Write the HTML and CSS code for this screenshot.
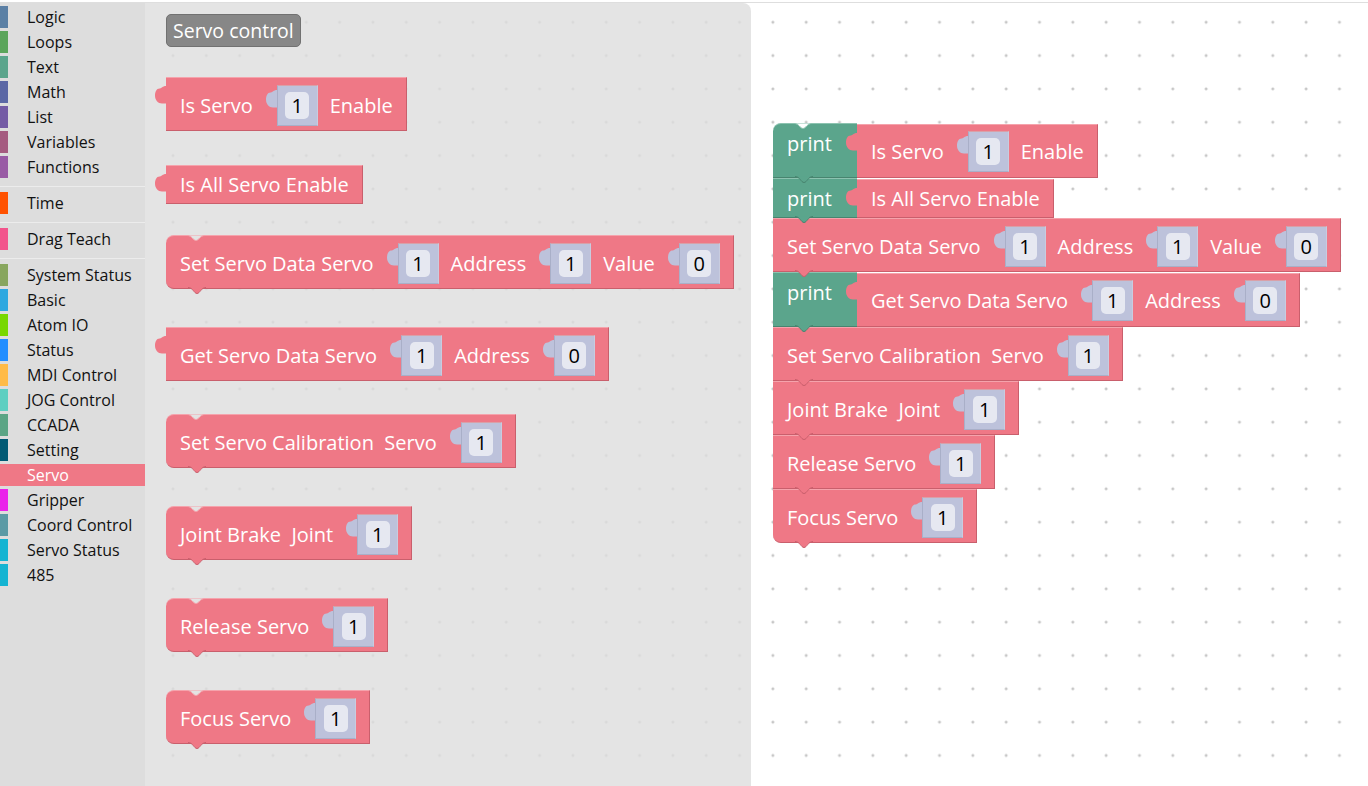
FILE: index.html
```html
<!DOCTYPE html>
<html lang="en">
<head>
<meta charset="utf-8">
<title>Servo blocks</title>
<link rel="stylesheet" href="styles.css">
</head>
<body>
<svg class="defs" width="0" height="0" aria-hidden="true">
  <defs>
    <path id="tab" d="M11 0C7.5 0 6.5 2.5 4.5 2.5C1.5 2.5 0 6 0 9.5C0 14 3 17.5 7 17.5L11 17.5Z"/>
    <path id="notchp" d="M0 0.5C5 0.5 6 5.5 9 5.5S13 0.5 18 0.5"/>
    <path id="bumpp" d="M0 0.5C5 0.5 6 6.5 9 6.5S13 0.5 18 0.5"/>
  </defs>
</svg>
<div class="app">
  <aside class="toolbox">
    <div class="cat"><span class="bar c-logic"></span>Logic</div>
    <div class="cat"><span class="bar c-loops"></span>Loops</div>
    <div class="cat"><span class="bar c-text"></span>Text</div>
    <div class="cat"><span class="bar c-math"></span>Math</div>
    <div class="cat"><span class="bar c-list"></span>List</div>
    <div class="cat"><span class="bar c-vars"></span>Variables</div>
    <div class="cat"><span class="bar c-func"></span>Functions</div>
    <div class="sep"></div>
    <div class="cat"><span class="bar c-time"></span>Time</div>
    <div class="sep"></div>
    <div class="cat"><span class="bar c-drag"></span>Drag Teach</div>
    <div class="sep"></div>
    <div class="cat"><span class="bar c-sys"></span>System Status</div>
    <div class="cat"><span class="bar c-basic"></span>Basic</div>
    <div class="cat"><span class="bar c-atom"></span>Atom IO</div>
    <div class="cat"><span class="bar c-status"></span>Status</div>
    <div class="cat"><span class="bar c-mdi"></span>MDI Control</div>
    <div class="cat"><span class="bar c-jog"></span>JOG Control</div>
    <div class="cat"><span class="bar c-ccada"></span>CCADA</div>
    <div class="cat"><span class="bar c-setting"></span>Setting</div>
    <div class="cat sel"><span class="bar c-servo"></span>Servo</div>
    <div class="cat"><span class="bar c-grip"></span>Gripper</div>
    <div class="cat"><span class="bar c-coord"></span>Coord Control</div>
    <div class="cat"><span class="bar c-sstat"></span>Servo Status</div>
    <div class="cat"><span class="bar c-485"></span>485</div>
  </aside>

  <main class="workspace">
    <div class="stack">
      <div class="row">
        <div class="print first">
          <svg class="notch" viewBox="0 0 18 7"><use href="#notchp"/></svg>
          <span class="t">print</span>
          <svg class="bump" viewBox="0 0 18 8"><use href="#bumpp"/></svg>
        </div>
        <div class="block out">
          <svg class="otab" viewBox="0 0 11 18"><use href="#tab"/></svg>
          <span class="t">Is Servo</span>
          <span class="slot"><svg class="itab" viewBox="0 0 11 18"><use href="#tab"/></svg><span class="field">1</span></span>
          <span class="t">Enable</span>
        </div>
      </div>
      <div class="row">
        <div class="print short">
          <span class="t">print</span>
          <svg class="bump" viewBox="0 0 18 8"><use href="#bumpp"/></svg>
        </div>
        <div class="block out short">
          <svg class="otab" viewBox="0 0 11 18"><use href="#tab"/></svg>
          <span class="t">Is All Servo Enable</span>
        </div>
      </div>
      <div class="block stmt">
        <span class="t">Set Servo Data Servo</span>
        <span class="slot"><svg class="itab" viewBox="0 0 11 18"><use href="#tab"/></svg><span class="field">1</span></span>
        <span class="t">Address</span>
        <span class="slot"><svg class="itab" viewBox="0 0 11 18"><use href="#tab"/></svg><span class="field">1</span></span>
        <span class="t">Value</span>
        <span class="slot"><svg class="itab" viewBox="0 0 11 18"><use href="#tab"/></svg><span class="field">0</span></span>
        <svg class="bump" viewBox="0 0 18 8"><use href="#bumpp"/></svg>
      </div>
      <div class="row">
        <div class="print">
          <span class="t">print</span>
          <svg class="bump" viewBox="0 0 18 8"><use href="#bumpp"/></svg>
        </div>
        <div class="block out">
          <svg class="otab" viewBox="0 0 11 18"><use href="#tab"/></svg>
          <span class="t">Get Servo Data Servo</span>
          <span class="slot"><svg class="itab" viewBox="0 0 11 18"><use href="#tab"/></svg><span class="field">1</span></span>
          <span class="t">Address</span>
          <span class="slot"><svg class="itab" viewBox="0 0 11 18"><use href="#tab"/></svg><span class="field">0</span></span>
        </div>
      </div>
      <div class="block stmt">
        <span class="t">Set Servo Calibration  Servo</span>
        <span class="slot"><svg class="itab" viewBox="0 0 11 18"><use href="#tab"/></svg><span class="field">1</span></span>
        <svg class="bump" viewBox="0 0 18 8"><use href="#bumpp"/></svg>
      </div>
      <div class="block stmt">
        <span class="t">Joint Brake  Joint</span>
        <span class="slot"><svg class="itab" viewBox="0 0 11 18"><use href="#tab"/></svg><span class="field">1</span></span>
        <svg class="bump" viewBox="0 0 18 8"><use href="#bumpp"/></svg>
      </div>
      <div class="block stmt">
        <span class="t">Release Servo</span>
        <span class="slot"><svg class="itab" viewBox="0 0 11 18"><use href="#tab"/></svg><span class="field">1</span></span>
        <svg class="bump" viewBox="0 0 18 8"><use href="#bumpp"/></svg>
      </div>
      <div class="block stmt last">
        <span class="t">Focus Servo</span>
        <span class="slot"><svg class="itab" viewBox="0 0 11 18"><use href="#tab"/></svg><span class="field">1</span></span>
        <svg class="bump" viewBox="0 0 18 8"><use href="#bumpp"/></svg>
      </div>
    </div>

    <div class="flyout">
      <div class="label">Servo control</div>

      <div class="block out fb1">
        <svg class="otab" viewBox="0 0 11 18"><use href="#tab"/></svg>
        <span class="t">Is Servo</span>
        <span class="slot"><svg class="itab" viewBox="0 0 11 18"><use href="#tab"/></svg><span class="field">1</span></span>
        <span class="t">Enable</span>
      </div>

      <div class="block out short fb2">
        <svg class="otab" viewBox="0 0 11 18"><use href="#tab"/></svg>
        <span class="t">Is All Servo Enable</span>
      </div>

      <div class="block stmt round fb3">
        <svg class="notch" viewBox="0 0 18 7"><use href="#notchp"/></svg>
        <span class="t">Set Servo Data Servo</span>
        <span class="slot"><svg class="itab" viewBox="0 0 11 18"><use href="#tab"/></svg><span class="field">1</span></span>
        <span class="t">Address</span>
        <span class="slot"><svg class="itab" viewBox="0 0 11 18"><use href="#tab"/></svg><span class="field">1</span></span>
        <span class="t">Value</span>
        <span class="slot"><svg class="itab" viewBox="0 0 11 18"><use href="#tab"/></svg><span class="field">0</span></span>
        <svg class="bump" viewBox="0 0 18 8"><use href="#bumpp"/></svg>
      </div>

      <div class="block out">
        <svg class="otab" viewBox="0 0 11 18"><use href="#tab"/></svg>
        <span class="t">Get Servo Data Servo</span>
        <span class="slot"><svg class="itab" viewBox="0 0 11 18"><use href="#tab"/></svg><span class="field">1</span></span>
        <span class="t">Address</span>
        <span class="slot"><svg class="itab" viewBox="0 0 11 18"><use href="#tab"/></svg><span class="field">0</span></span>
      </div>

      <div class="block stmt round">
        <svg class="notch" viewBox="0 0 18 7"><use href="#notchp"/></svg>
        <span class="t">Set Servo Calibration  Servo</span>
        <span class="slot"><svg class="itab" viewBox="0 0 11 18"><use href="#tab"/></svg><span class="field">1</span></span>
        <svg class="bump" viewBox="0 0 18 8"><use href="#bumpp"/></svg>
      </div>

      <div class="block stmt round">
        <svg class="notch" viewBox="0 0 18 7"><use href="#notchp"/></svg>
        <span class="t">Joint Brake  Joint</span>
        <span class="slot"><svg class="itab" viewBox="0 0 11 18"><use href="#tab"/></svg><span class="field">1</span></span>
        <svg class="bump" viewBox="0 0 18 8"><use href="#bumpp"/></svg>
      </div>

      <div class="block stmt round">
        <svg class="notch" viewBox="0 0 18 7"><use href="#notchp"/></svg>
        <span class="t">Release Servo</span>
        <span class="slot"><svg class="itab" viewBox="0 0 11 18"><use href="#tab"/></svg><span class="field">1</span></span>
        <svg class="bump" viewBox="0 0 18 8"><use href="#bumpp"/></svg>
      </div>

      <div class="block stmt round">
        <svg class="notch" viewBox="0 0 18 7"><use href="#notchp"/></svg>
        <span class="t">Focus Servo</span>
        <span class="slot"><svg class="itab" viewBox="0 0 11 18"><use href="#tab"/></svg><span class="field">1</span></span>
        <svg class="bump" viewBox="0 0 18 8"><use href="#bumpp"/></svg>
      </div>
    </div>
  </main>
</div>
</body>
</html>
```

FILE: styles.css
```css
* { box-sizing: border-box; }
html, body { margin: 0; height: 100%; }
body {
  background: #fff;
  font-family: "Open Sans", "Noto Sans", sans-serif;
  overflow: hidden;
}
.defs { position: absolute; width: 0; height: 0; overflow: hidden; }

.app {
  display: flex;
  height: 784px;
  margin-top: 2px;
  border-top: 1px solid #dedede;
}

/* ---------- toolbox ---------- */
.toolbox {
  width: 145px;
  flex: none;
  background: #ddd;
  padding-top: 3px;
  font-size: 16px;
  color: #111;
}
.cat {
  display: flex;
  align-items: center;
  gap: 19px;
  height: 22px;
  margin-bottom: 3px;
  white-space: nowrap;
}
.cat .bar { width: 8px; height: 22px; flex: none; }
.cat.sel { background: #ef7886; color: #fff; }
.sep { height: 1px; background: #ececec; margin: 8px 0 5px; }

.c-logic { background: #5b80a5; }
.c-loops { background: #5ba55b; }
.c-text { background: #5ba58c; }
.c-math { background: #5b67a5; }
.c-list { background: #745ba5; }
.c-vars { background: #a55b80; }
.c-func { background: #995ba5; }
.c-time { background: #ff5200; }
.c-drag { background: #f2548c; }
.c-sys { background: #88a65e; }
.c-basic { background: #2ea8e0; }
.c-atom { background: #77d800; }
.c-status { background: #228eff; }
.c-mdi { background: #ffbb47; }
.c-jog { background: #5ecfc1; }
.c-ccada { background: #5ba585; }
.c-setting { background: #005a74; }
.c-servo { background: #ef7886; }
.c-grip { background: #ea22ea; }
.c-coord { background: #5b9aa5; }
.c-sstat { background: #14b4d2; }
.c-485 { background: #14b4d2; }

/* ---------- workspace ---------- */
.workspace {
  flex: 1;
  position: relative;
  overflow: hidden;
  background-color: #fff;
  background-image: radial-gradient(circle, #c6c6c6 1.1px, rgba(255,255,255,0) 1.8px);
  background-size: 33.333px 33.333px;
  background-position: 11.3px 2.6px;
}

.flyout {
  position: absolute;
  left: 0;
  top: 0;
  bottom: 0;
  width: 606px;
  z-index: 1;
  background: rgba(221, 221, 221, 0.8);
  border-top-right-radius: 8px;
  display: flex;
  flex-direction: column;
  align-items: flex-start;
  gap: 33px;
  padding: 11px 0 0 21px;
}
.flyout .stmt { margin-bottom: 5px; }
.flyout .fb1 { margin-top: -3px; }
.flyout .fb2 { margin-top: 1px; }
.flyout .fb3 { margin-top: -2px; }

.label {
  height: 33px;
  padding: 0 6px;
  display: flex;
  align-items: center;
  background: #878787;
  border: 1px solid #717171;
  border-radius: 5px;
  color: #fff;
  font-size: 19.5px;
}

.stack {
  position: absolute;
  left: 628px;
  top: 120px;
  z-index: 0;
  display: flex;
  flex-direction: column;
  align-items: flex-start;
}
.row { display: flex; align-items: flex-end; }

/* ---------- blocks ---------- */
.t { white-space: pre; }

.block {
  position: relative;
  flex: none;
  display: flex;
  align-items: center;
  height: 54px;
  padding: 2px 13px 0 14px;
  background: #ef7886;
  color: #fff;
  font-size: 20px;
  border-top: 1px solid #f5a3ac;
  border-bottom: 1px solid #c95f6c;
  border-right: 1px solid #c95f6c;
}
.block.short { height: 39px; padding-top: 0; }
.block.round { border-radius: 8px 0 0 8px; }
.block.last { border-bottom-left-radius: 8px; }
.row .block { padding-top: 0; }

.otab {
  position: absolute;
  left: -11px;
  top: 8px;
  width: 11px;
  height: 18px;
  overflow: visible;
  fill: #ef7886;
}

.slot {
  position: relative;
  flex: none;
  width: 41px;
  height: 41px;
  margin: 0 12px 0 24px;
  display: flex;
  align-items: center;
  justify-content: center;
  background: #bdc2db;
  border: 1px solid;
  border-color: #d9a0a8 #c8ccdf #a9afc8 #a9afc8;
}
.slot:last-of-type { margin-right: 0; }
.itab {
  position: absolute;
  left: -12px;
  top: 4px;
  width: 11px;
  height: 18px;
  overflow: visible;
  fill: #bdc2db;
}
.field {
  width: 24px;
  height: 27px;
  border-radius: 5px;
  background: #e6e8f1;
  color: #000;
  display: flex;
  align-items: center;
  justify-content: center;
  font-size: 20px;
}

.notch {
  position: absolute;
  top: -1px;
  left: 21px;
  width: 18px;
  height: 7px;
  overflow: visible;
  z-index: 1;
  fill: #e3e3e3;
  stroke: #f5a3ac;
  stroke-width: 1;
}
.stack .notch { fill: #fff; }
.bump {
  position: absolute;
  left: 22px;
  bottom: -7px;
  width: 18px;
  height: 8px;
  overflow: visible;
  z-index: 3;
  fill: #ef7886;
  stroke: #c95f6c;
  stroke-width: 1;
}

.print {
  position: relative;
  flex: none;
  width: 84px;
  height: 55px;
  padding-left: 14px;
  background: #5ba58c;
  color: #fff;
  font-size: 20px;
  line-height: 40px;
  border-top: 1px solid #8cc3b0;
  border-bottom: 1px solid #48846f;
}
.print.short { height: 40px; }
.print.first { border-top-left-radius: 8px; }
.print .notch { stroke: #8cc3b0; }
.print .bump { fill: #5ba58c; stroke: #48846f; }
```
